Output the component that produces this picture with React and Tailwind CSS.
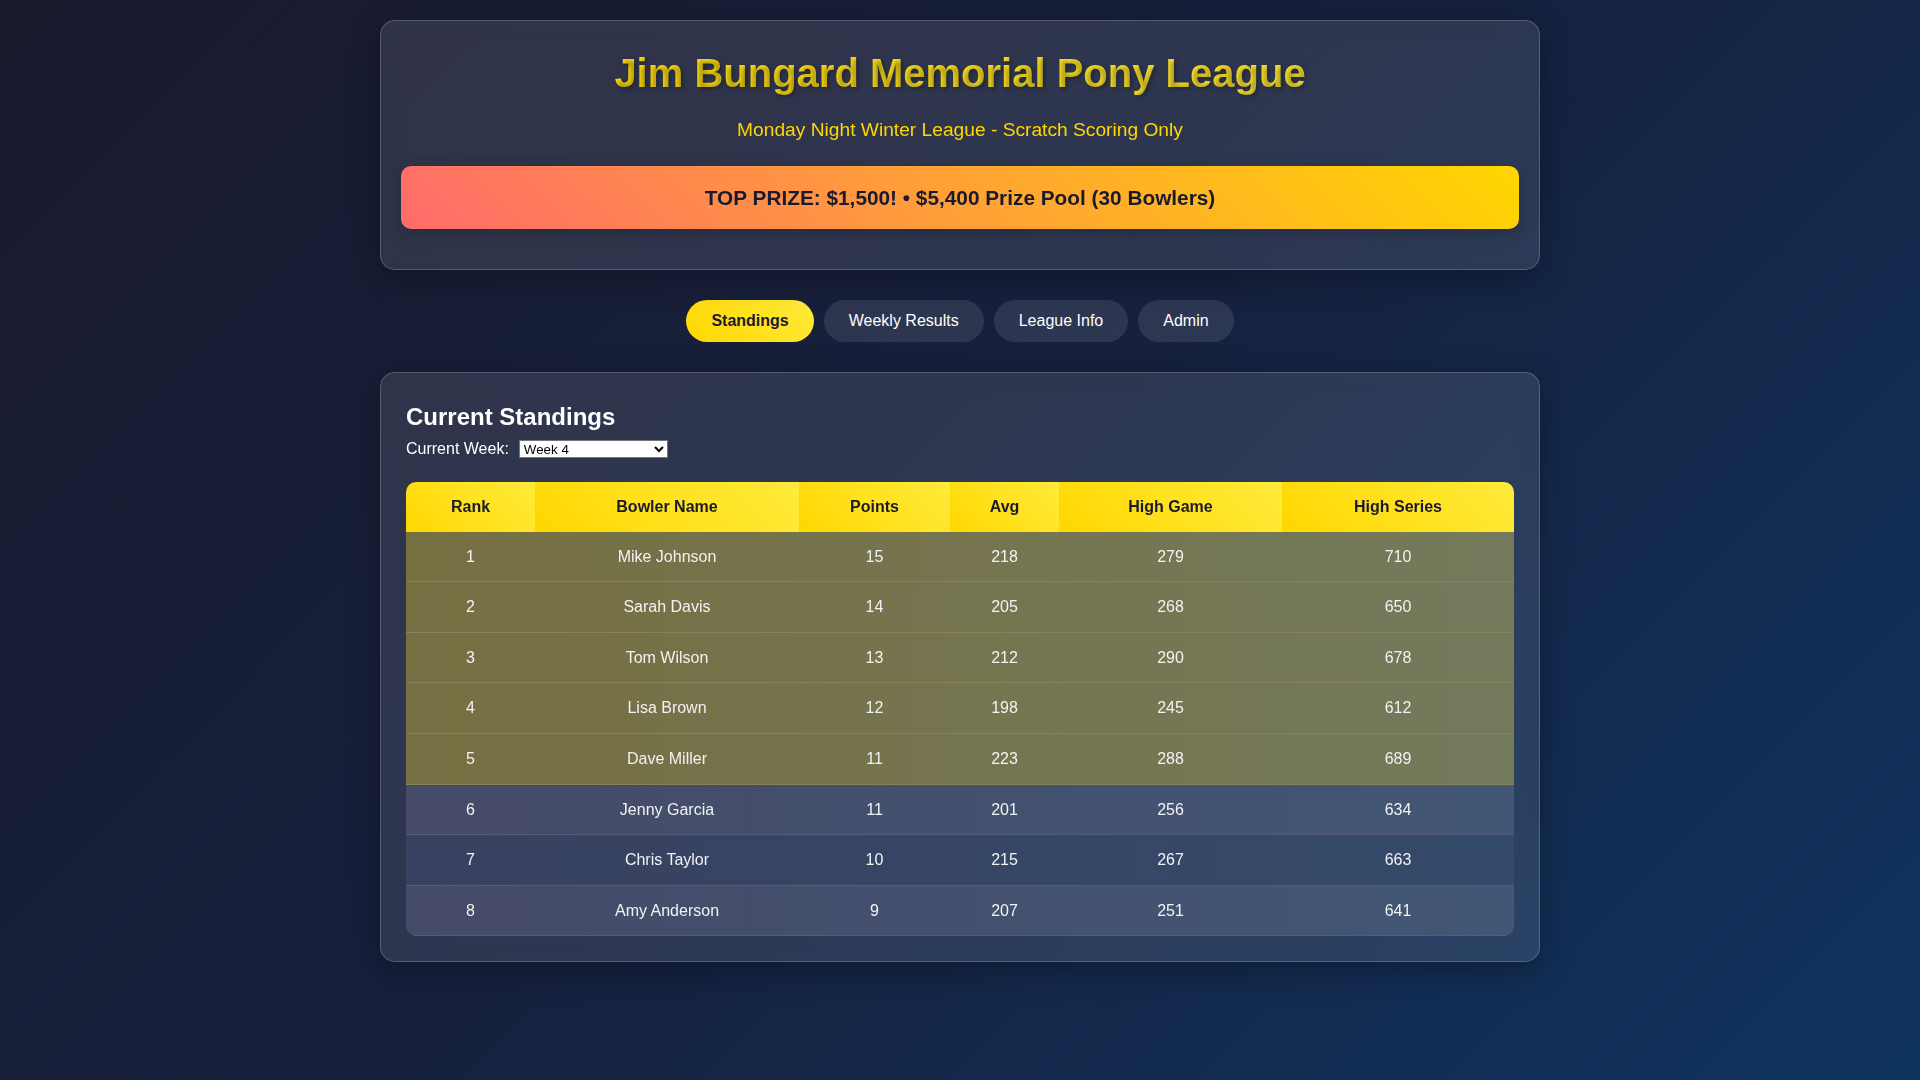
import React from "react";

const rows = [
  { rank: 1, name: "Mike Johnson", pts: 15, avg: 218, hg: 279, hs: 710 },
  { rank: 2, name: "Sarah Davis", pts: 14, avg: 205, hg: 268, hs: 650 },
  { rank: 3, name: "Tom Wilson", pts: 13, avg: 212, hg: 290, hs: 678 },
  { rank: 4, name: "Lisa Brown", pts: 12, avg: 198, hg: 245, hs: 612 },
  { rank: 5, name: "Dave Miller", pts: 11, avg: 223, hg: 288, hs: 689 },
  { rank: 6, name: "Jenny Garcia", pts: 11, avg: 201, hg: 256, hs: 634 },
  { rank: 7, name: "Chris Taylor", pts: 10, avg: 215, hg: 267, hs: 663 },
  { rank: 8, name: "Amy Anderson", pts: 9, avg: 207, hg: 251, hs: 641 },
];

const rowClass = (i) => {
  if (i < 5) return "bg-[linear-gradient(90deg,#766f42,#747a5c)]";
  if (i % 2 === 0) return "bg-[linear-gradient(90deg,#394160,#344a6a)]";
  return "bg-[linear-gradient(90deg,#454a67,#425775)]";
};

const cellBorder = (i) => (i < 5 ? "border-b border-[#86825a]" : "border-b border-[#545c78]");

export default function App() {
  const th = "bg-[linear-gradient(45deg,#ffd700,#ffeb3b)] px-3 py-3 text-center font-bold text-[#1a1a2e]";
  const btn = "rounded-[25px] px-[25px] py-3 text-[16px] leading-[normal]";
  return (
    <div className="min-h-screen bg-[linear-gradient(135deg,#1a1a2e_0%,#16213e_50%,#0f3460_100%)] font-['Liberation_Sans',Arial,sans-serif] text-[16px] text-white leading-[1.6]">
      <div className="mx-auto max-w-[1200px] p-5">
        <header className="rounded-[15px] border border-white/20 bg-white/10 p-5 text-center shadow-[0_8px_32px_rgba(0,0,0,0.3)] backdrop-blur-[10px]">
          <h1 className="m-0 bg-[linear-gradient(45deg,#ffd700,#ffeb3b)] bg-clip-text text-[40px] font-bold leading-[1.6] text-transparent [text-shadow:2px_2px_4px_rgba(0,0,0,0.3)]">
            Jim Bungard Memorial Pony League
          </h1>
          <p className="mt-[10px] text-[19.2px] leading-[1.6] text-[#ffd700]">
            Monday Night Winter League - Scratch Scoring Only
          </p>
          <div className="my-5 rounded-[10px] bg-[linear-gradient(45deg,#ff6b6b,#ffd700)] p-[15px] text-[20.8px] font-bold leading-[1.6] text-[#1a1a2e] shadow-[0_4px_15px_rgba(0,0,0,0.2)]">
            TOP PRIZE: $1,500! • $5,400 Prize Pool (30 Bowlers)
          </div>
        </header>

        <nav className="my-[30px] flex justify-center gap-[10px]">
          <button className={`${btn} bg-[linear-gradient(45deg,#ffd700,#ffeb3b)] font-bold text-[#1a1a2e]`}>
            Standings
          </button>
          <button className={`${btn} bg-white/10 text-white`}>Weekly Results</button>
          <button className={`${btn} bg-white/10 text-white`}>League Info</button>
          <button className={`${btn} bg-white/10 text-white`}>Admin</button>
        </nav>

        <section className="rounded-[15px] border border-white/20 bg-white/10 p-[25px] shadow-[0_8px_32px_rgba(0,0,0,0.3)] backdrop-blur-[10px]">
          <h2 className="text-[24px] font-bold leading-[1.6] text-white">Current Standings</h2>
          <div className="mb-5 leading-[1.6]">
            <label>Current Week:</label>
            <select
              defaultValue="4"
              className="ml-[10px] h-[18px] w-[149px] border border-[#767676] bg-white align-baseline text-[13.33px] leading-[normal] text-black"
            >
              <option value="1">Week 1</option>
              <option value="2">Week 2</option>
              <option value="3">Week 3</option>
              <option value="4">Week 4</option>
            </select>
          </div>

          <div className="overflow-hidden rounded-[10px]">
            <table className="w-full table-fixed border-collapse leading-[1.6]">
              <colgroup>
                <col className="w-[129px]" />
                <col className="w-[264px]" />
                <col className="w-[151px]" />
                <col className="w-[109px]" />
                <col className="w-[223px]" />
                <col className="w-[232px]" />
              </colgroup>
              <thead>
                <tr>
                  <th className={th}>Rank</th>
                  <th className={th}>Bowler Name</th>
                  <th className={th}>Points</th>
                  <th className={th}>Avg</th>
                  <th className={th}>High Game</th>
                  <th className={th}>High Series</th>
                </tr>
              </thead>
              <tbody>
                {rows.map((r, i) => (
                  <tr key={r.rank} className={rowClass(i)}>
                    <td className={`px-3 py-3 text-center text-[#f2f2f2] ${cellBorder(i)}`}>{r.rank}</td>
                    <td className={`px-3 py-3 text-center text-[#f2f2f2] ${cellBorder(i)}`}>{r.name}</td>
                    <td className={`px-3 py-3 text-center text-[#f2f2f2] ${cellBorder(i)}`}>{r.pts}</td>
                    <td className={`px-3 py-3 text-center text-[#f2f2f2] ${cellBorder(i)}`}>{r.avg}</td>
                    <td className={`px-3 py-3 text-center text-[#f2f2f2] ${cellBorder(i)}`}>{r.hg}</td>
                    <td className={`px-3 py-3 text-center text-[#f2f2f2] ${cellBorder(i)}`}>{r.hs}</td>
                  </tr>
                ))}
              </tbody>
            </table>
          </div>
        </section>
      </div>
    </div>
  );
}
